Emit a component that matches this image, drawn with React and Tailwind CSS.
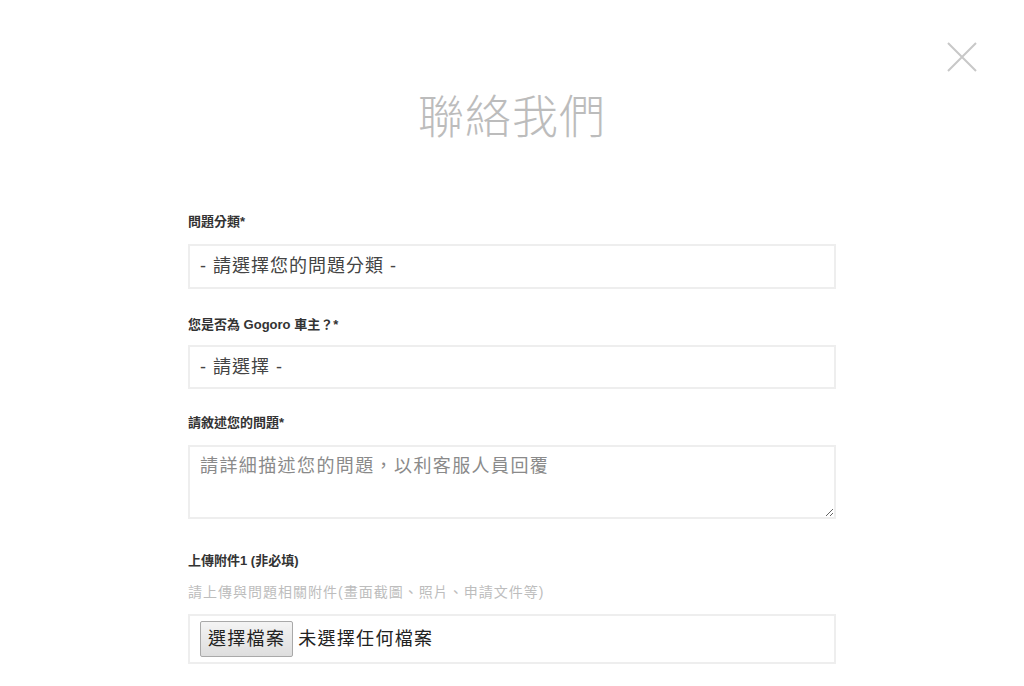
import { useState } from "react";

const font = { fontFamily: '"Liberation Sans", "Noto Sans CJK TC", sans-serif' };

function Label({ children, className = "" }) {
  return (
    <div className={`text-[13px] leading-[20px] font-bold text-[#333] ${className}`}>
      {children}
    </div>
  );
}

export default function App() {
  const [category, setCategory] = useState("");
  const [owner, setOwner] = useState("");
  const [message, setMessage] = useState("");

  return (
    <div
      className="relative min-h-[686px] w-full bg-white"
      style={font}
    >
      <button
        type="button"
        aria-label="關閉"
        className="absolute right-[47px] top-[42px] h-[30px] w-[30px] text-[#c8c8c8]"
      >
        <svg viewBox="0 0 30 30" className="h-full w-full" fill="none" stroke="currentColor" strokeWidth="2">
          <path d="M1 1 L29 29 M29 1 L1 29" />
        </svg>
      </button>

      <div className="mx-auto w-[648px] pt-[89px]">
        <h1 className="text-center text-[46px] font-light leading-[56px] tracking-[1px] text-[#bcbcbc]">
          聯絡我們
        </h1>

        <form className="mt-[67px] flex flex-col">
          <Label>問題分類*</Label>
          <select
            value={category}
            onChange={(e) => setCategory(e.target.value)}
            className="mt-[12px] h-[45px] w-full appearance-none rounded-none border-2 border-[#eeeeee] bg-white px-[10px] text-[18px] tracking-[1px] text-[#444] outline-none"
          >
            <option value="">- 請選擇您的問題分類 -</option>
            <option value="1">車輛問題</option>
            <option value="2">電池問題</option>
          </select>

          <Label className="mt-[26px]">您是否為 Gogoro 車主？*</Label>
          <select
            value={owner}
            onChange={(e) => setOwner(e.target.value)}
            className="mt-[10px] h-[44px] w-full appearance-none rounded-none border-2 border-[#eeeeee] bg-white px-[10px] text-[18px] tracking-[1px] text-[#444] outline-none"
          >
            <option value="">- 請選擇 -</option>
            <option value="y">是</option>
            <option value="n">否</option>
          </select>

          <Label className="mt-[24px]">請敘述您的問題*</Label>
          <textarea
            value={message}
            onChange={(e) => setMessage(e.target.value)}
            placeholder="請詳細描述您的問題，以利客服人員回覆"
            className="mt-[12px] h-[74px] w-full rounded-none border-2 border-[#eeeeee] px-[10px] py-[6px] text-[18px] leading-[26px] tracking-[1.4px] text-[#444] outline-none placeholder:text-[#8a8a8a]"
          />

          <Label className="mt-[32px]">上傳附件1 (非必填)</Label>
          <div className="mt-[11px] text-[14px] leading-[20px] tracking-[1px] text-[#bdbdbd]">
            請上傳與問題相關附件(畫面截圖、照片、申請文件等)
          </div>
          <div className="mt-[12px] flex h-[50px] w-full items-center border-2 border-[#eeeeee] px-[10px]">
            <button
              type="button"
              className="h-[36px] rounded-[2px] border border-[#a9a9a9] bg-gradient-to-b from-[#f4f4f4] to-[#dedede] px-[7px] text-[18px] leading-[22px] tracking-[1.3px] text-[#222]"
            >
              選擇檔案
            </button>
            <span className="ml-[5px] text-[18px] tracking-[1.3px] text-[#222]">未選擇任何檔案</span>
          </div>
        </form>
      </div>
    </div>
  );
}
